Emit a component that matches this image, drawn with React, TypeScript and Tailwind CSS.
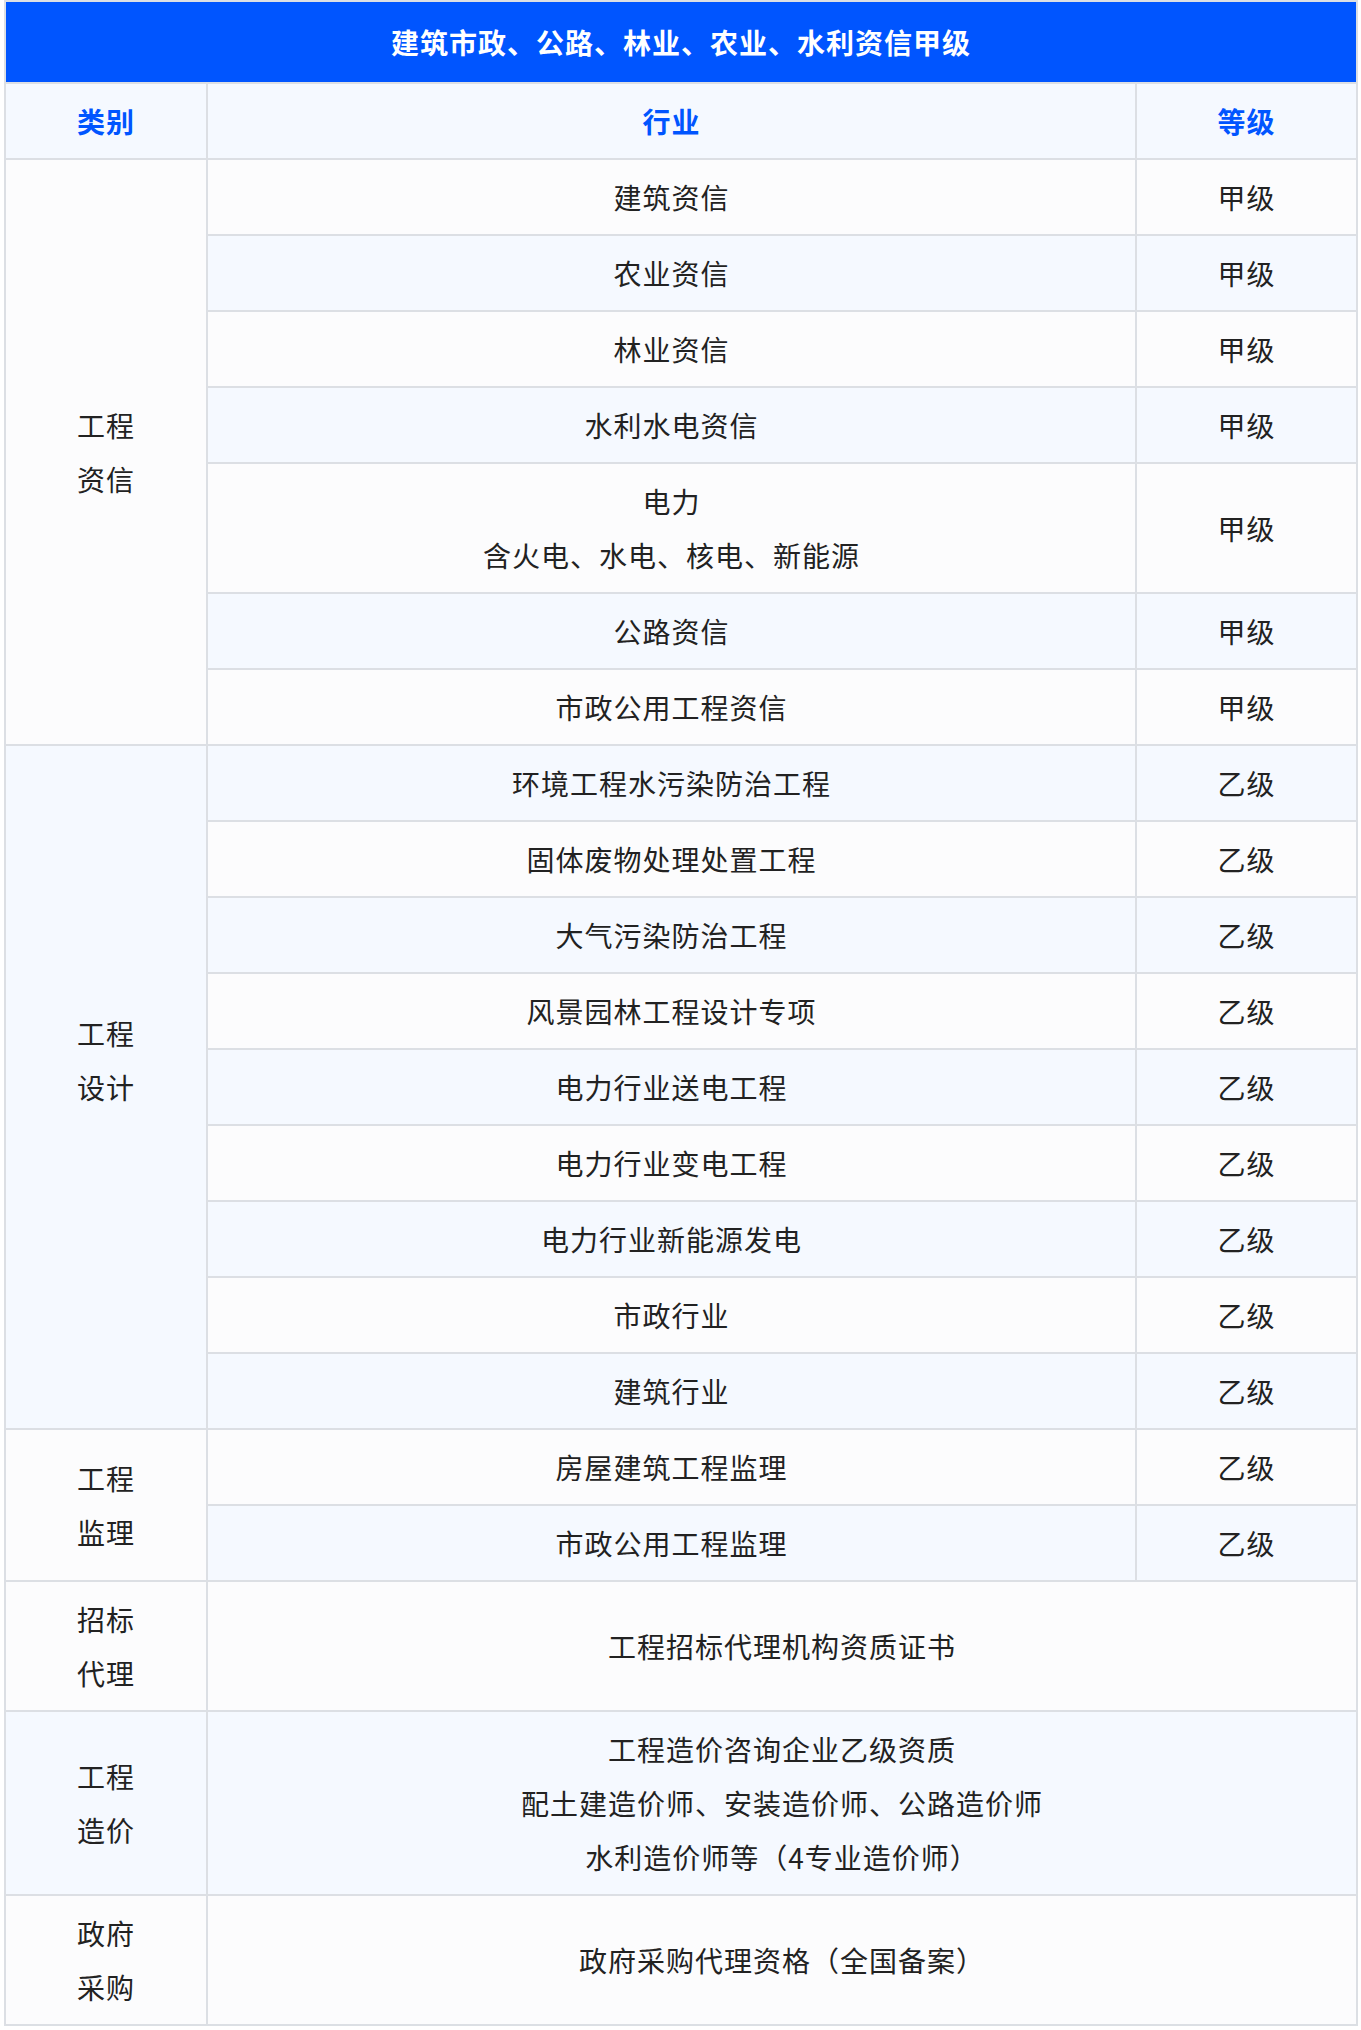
import React from 'react'

type Row = { lines: string[]; grade?: string }
type Group = { category: string[]; rows: Row[] }

// 资质分组数据
const groups: Group[] = [
  {
    category: ['工程', '资信'],
    rows: [
      { lines: ['建筑资信'], grade: '甲级' },
      { lines: ['农业资信'], grade: '甲级' },
      { lines: ['林业资信'], grade: '甲级' },
      { lines: ['水利水电资信'], grade: '甲级' },
      { lines: ['电力', '含火电、水电、核电、新能源'], grade: '甲级' },
      { lines: ['公路资信'], grade: '甲级' },
      { lines: ['市政公用工程资信'], grade: '甲级' }
    ]
  },
  {
    // 原表里这一格末尾多一个空行
    category: ['工程', '设计', ''],
    rows: [
      { lines: ['环境工程水污染防治工程'], grade: '乙级' },
      { lines: ['固体废物处理处置工程'], grade: '乙级' },
      { lines: ['大气污染防治工程'], grade: '乙级' },
      { lines: ['风景园林工程设计专项'], grade: '乙级' },
      { lines: ['电力行业送电工程'], grade: '乙级' },
      { lines: ['电力行业变电工程'], grade: '乙级' },
      { lines: ['电力行业新能源发电'], grade: '乙级' },
      { lines: ['市政行业'], grade: '乙级' },
      { lines: ['建筑行业'], grade: '乙级' }
    ]
  },
  {
    category: ['工程', '监理'],
    rows: [
      { lines: ['房屋建筑工程监理'], grade: '乙级' },
      { lines: ['市政公用工程监理'], grade: '乙级' }
    ]
  },
  {
    category: ['招标', '代理'],
    rows: [{ lines: ['工程招标代理机构资质证书'] }]
  },
  {
    category: ['工程', '造价'],
    rows: [
      {
        lines: [
          '工程造价咨询企业乙级资质',
          '配土建造价师、安装造价师、公路造价师',
          '水利造价师等（4专业造价师）'
        ]
      }
    ]
  },
  {
    category: ['政府', '采购'],
    rows: [{ lines: ['政府采购代理资格（全国备案）'] }]
  }
]

const cell = 'border-2 border-[#dcdfe4] py-[10px] leading-[54px] text-center align-middle'

const App: React.FC = () => {
  let rowIndex = 0

  return (
    <div
      className="min-h-screen bg-white pl-[4px] text-[28px] tracking-[1px] text-[#222222]"
      style={{ fontFamily: '"Noto Sans CJK SC", "Noto Sans", sans-serif' }}
    >
      <table className="w-[1352px] table-fixed border-collapse border-2 border-[#dcdfe4]">
        <colgroup>
          <col className="w-[202px]" />
          <col className="w-[929px]" />
          <col className="w-[221px]" />
        </colgroup>
        <thead>
          {/* 标题 */}
          <tr>
            <th
              colSpan={3}
              className="border-2 border-[#dcdfe4] bg-[#0055ff] py-[13px] text-center font-bold leading-[54px] text-white"
            >
              建筑市政、公路、林业、农业、水利资信甲级
            </th>
          </tr>
          <tr className="bg-[#f5f9ff] text-[#0055ff]">
            <th className={`${cell} font-bold`}>类别</th>
            <th className={`${cell} font-bold`}>行业</th>
            <th className={`${cell} font-bold`}>等级</th>
          </tr>
        </thead>
        <tbody>
          {groups.map((group) =>
            group.rows.map((row, i) => {
              rowIndex += 1
              const bg = rowIndex % 2 === 1 ? 'bg-[#fcfcfd]' : 'bg-[#f5f9ff]'
              return (
                <tr key={`${group.category.join('')}-${i}`} className={bg}>
                  {i === 0 && (
                    <td rowSpan={group.rows.length} className={cell}>
                      {group.category.map((c, k) => (
                        <div key={k} className="h-[54px]">{c}</div>
                      ))}
                    </td>
                  )}
                  <td colSpan={row.grade ? 1 : 2} className={cell}>
                    {row.lines.map((l) => (
                      <div key={l}>{l}</div>
                    ))}
                  </td>
                  {row.grade && <td className={cell}>{row.grade}</td>}
                </tr>
              )
            })
          )}
        </tbody>
      </table>
    </div>
  )
}

export default App
